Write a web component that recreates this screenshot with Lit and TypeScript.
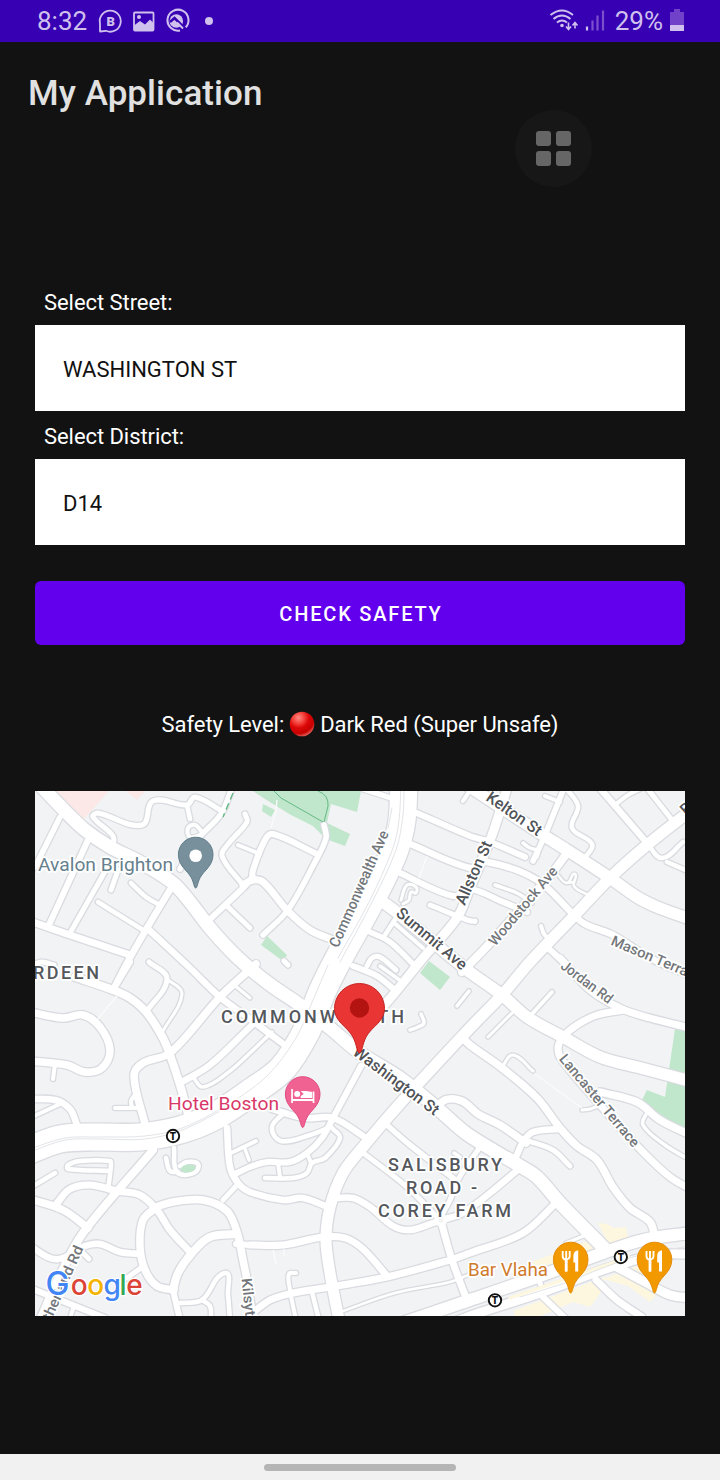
import { LitElement, html, svg, css } from "lit";
import { customElement } from "lit/decorators.js";

type Road = [number, string];

/* Roads: fill width, then the points along the centre line. */
const ROADS: Road[] = [
  // Allston, Woodstock and the northern grid
  [9, "508,785 492,835 470,888 457,918 423,958 387,1002 372,1016"],
  [8, "567,853 552,873 490,943 462,972"],
  [6, "417,813 470,836 490,842 525,857"],
  [6.5, "408,843 470,868 487,862 537,880 573,914 585,924 613,935 650,958 690,976"],
  [6, "398,872 453,896 470,889 503,902 527,912"],
  [3.5, "495,885 517,893 532,903"],
  [5, "430,905 470,921 475,921"],
  [5.5, "370,932 390,942 415,966"],
  [4, "393,922 423,948"],
  [4.5, "385,935 396,918"],
  [3, "401,900 407,885 416,887 416,893 411,892 409,900 403,904"],
  [5, "367,966 372,958 380,957 396,970"],
  [6, "353,966 377,976 397,992"],
  [3.5, "380,966 405,984"],
  [5, "363,789 391,798"],
  [4, "463,801 471,789"],
  [4, "545,796 560,802"],
  [5.5, "564,788 545,835 533,861"],
  [4.5, "566,788 578,806 572,828 592,844 585,858"],
  [3.5, "523,843 530,848 538,851 537,857"],
  [2.5, "557,874 567,883 575,874 574,886 588,895"],
  [2.5, "567,883 574,882"],
  [6.5, "598,786 647,843"],
  [4.5, "647,843 662,858 683,842"],
  [4, "615,805 628,795 640,789"],
  [5, "647,788 672,820"],
  [4.5, "667,862 690,872"],
  [4, "541,926 544,934 550,940"],
  [6, "548,948 572,970"],
  [4, "470,920 475,922"],
  // north-west
  [5.5, "60,817 35,867"],
  [6, "88,840 48,927"],
  [7, "30,921 70,935 130,955"],
  [5, "107,868 70,933"],
  [5, "118,870 111,890"],
  [6.5, "173,885 147,928 127,963 113,990"],
  [4.5, "98,902 143,930"],
  [4.5, "131,883 146,897 160,905"],
  [6.5, "147,928 190,968 220,997 250,1019 282,1043"],
  [5, "113,848 113,836 93,817 98,813 142,825 153,801 187,805 195,797 222,811"],
  [5.5, "232,788 221,814 197,840 180,869"],
  [4.5, "187,805 190,819"],
  [4, "201,835 190,837 188,828 195,825 202,832"],
  [5, "243,885 222,856 229,843 247,822 245,814"],
  [4, "238,845 260,854"],
  [6, "207,922 243,888 253,877"],
  [5, "227,906 250,928"],
  [6, "317,854 273,834 265,840 253,870 252,881"],
  [7, "243,885 252,880 263,882 287,910 310,930 333,940"],
  [5.5, "324,825 326,838 315,862 288,910 263,935"],
  [5, "284,961 288,965"],
  // west
  [5, "30,966 42,962 54,965"],
  [8, "75,977 113,990 130,998 147,1013 163,1038 170,1055 180,1085 189,1118"],
  [7.5, "30,1012 63,1018 83,1015 100,1027 110,1050 102,1068 85,1072 67,1065 30,1061"],
  [4, "55,1064 53,1079"],
  [7.5, "256,964 220,997 170,1053 143,1063 134,1076 145,1124"],
  [6.5, "180,1083 210,1065 250,1027 262,1016"],
  [3.5, "193,1077 203,1087 230,1071 250,1053 272,1032"],
  [5, "149,962 167,979 147,1011"],
  [3, "167,979 182,994 163,1031"],
  [6, "130,962 113,990"],
  [3, "233,984 250,998"],
  [6.5, "30,1099 55,1100 70,1109 77,1125"],
  [4, "30,1118 60,1104"],
  [4, "115,1108 138,1108"],
  [4, "132,1107 131,1101 134,1096"],
  [8, "153,1150 83,1233 60,1275 40,1320"],
  [7.5, "30,1199 63,1210 88,1228"],
  [7, "57,1203 70,1189 90,1185 117,1191 140,1195 157,1210 170,1230 191,1253"],
  [7.5, "157,1207 143,1220 140,1247 145,1270 157,1286 174,1290"],
  [7.5, "153,1208 173,1202 203,1200 227,1211 237,1232 243,1260 247,1280 253,1320"],
  [8, "173,1290 178,1273 192,1253 210,1237 236,1234"],
  [6, "173,1290 180,1320"],
  [4.5, "180,1303 202,1300 225,1273 228,1295 230,1320"],
  [4.5, "202,1300 210,1306 211,1320"],
  [6.5, "30,1246 50,1258 63,1258 85,1246 100,1244 120,1252 140,1254"],
  [5, "80,1250 89,1259"],
  [5, "142,1267 127,1278"],
  [6, "30,1288 105,1318"],
  [4, "73,1309 70,1318"],
  [4.5, "110,1171 68,1169 68,1165 80,1161 110,1161 111,1165 108,1190"],
  [4.5, "30,1188 55,1173"],
  [4.5, "174,1148 177,1172 194,1173 198,1164 187,1162 180,1166"],
  [4.5, "166,1158 170,1171 178,1172"],
  [6.5, "227,1128 230,1167 238,1183 250,1192 283,1200 303,1198 328,1207"],
  [5, "238,1184 223,1200"],
  [6, "233,1175 250,1167 267,1162 290,1162 307,1153 322,1138 333,1118 361,1066"],
  [4, "231,1153 256,1141"],
  [3.5, "245,1149 249,1160"],
  // around the hotel
  [6.5, "272,1109 303,1118 333,1118 363,1136"],
  [4.5, "285,1112 272,1127 281,1141 310,1135 331,1127"],
  [4.5, "333,1129 340,1138 325,1158 312,1163 307,1173 293,1178 265,1178"],
  [4, "278,1163 280,1177"],
  [4, "307,1153 311,1163"],
  // south
  [7, "250,1245 283,1245 323,1237 345,1238 363,1249 387,1276"],
  [6, "236,1244 250,1245"],
  [6.5, "335,1198 353,1198 370,1207 393,1226 410,1230 433,1223 442,1220 463,1213 490,1193 520,1168"],
  [5, "362,1152 407,1187 437,1217"],
  [5.5, "387,1125 410,1145 457,1181"],
  [5, "440,1218 450,1200 459,1178 480,1147"],
  [3.5, "454,1153 460,1157"],
  [7, "442,1225 452,1260 468,1303"],
  [7, "250,1315 270,1300 293,1293 330,1287 387,1277 450,1260 470,1253 523,1233 557,1202"],
  [2.5, "340,1312 395,1293 450,1282 475,1272"],
  [4, "296,1273 289,1274 290,1290 296,1320"],
  [4.5, "312,1292 319,1320"],
  [3, "566,1243 586,1235"],
  // east
  [7.5, "462,1037 470,1045 502,1068 537,1098 560,1128 577,1146 597,1160 613,1187 630,1208 650,1222 655,1238"],
  [6.5, "560,1129 533,1132 523,1142 516,1157"],
  [5, "525,1140 553,1150 570,1166"],
  [7.5, "434,1112 445,1100 462,1101 478,1114 500,1125 526,1143"],
  [7, "560,958 590,990 622,1009 650,1018 690,1028"],
  [7, "623,1010 597,1015 577,1025 563,1037 558,1048 562,1060 600,1105 643,1152 670,1177 690,1189"],
  [7.5, "600,1092 637,1102 660,1120 690,1135"],
  [3.5, "647,1112 643,1125 665,1145 690,1160"],
  [4, "532,1014 552,992"],
  [3, "512,1013 488,1037"],
  [3, "502,1067 513,1055 533,1071"],
  [3.5, "421,1014 424,1023 418,1027 410,1030"],
  [3.5, "469,991 457,1006"],
  [3, "582,1110 590,1109 598,1106"],
  [7, "596,1280 617,1300 642,1317"],
  [6, "543,1297 565,1318"],
  [9, "615,1266 647,1283 670,1295 690,1298"],
  [5, "539,1280 543,1292"],
  // arterials
  [13, "40,785 67,813 85,830 110,847 140,862 173,883 190,902 210,928 237,957 268,983 300,1005 330,1028 360,1053 400,1078 437,1108 467,1134 520,1166 537,1177 560,1203 605,1249"],
  [11.5, "383,902 400,915 467,970 502,995 527,1017 563,1037 600,1057 637,1067 690,1081"],
  [11.5, "467,785 543,835 567,850 610,878 637,897 657,907 690,919"],
  [11, "690,811 647,845 610,878 573,917 530,962 502,995 470,1028 397,1107 363,1147 343,1173 330,1207 326,1240 330,1273 339,1320"],
  [12, "405,1322 470,1300 537,1277 603,1253 643,1240 690,1233"],
  [9, "450,1324 470,1316 543,1292 603,1270 655,1255 690,1254"],
  [27, "404,780 402,820 394,852 370,902 339,958 322,992 306,1032 282,1069 250,1093 215,1116 180,1130 140,1137 97,1137 60,1139 25,1152"],
];

/* Passes a smooth curve through every listed point. */
function curve(src: string): string {
  const p = src.split(" ").map((s) => s.split(",").map(Number));
  let d = `M${p[0]}`;
  for (let i = 0; i < p.length - 1; i++) {
    const a = p[i - 1] ?? p[i], b = p[i], c = p[i + 1], e = p[i + 2] ?? c;
    const len = Math.hypot(c[0] - b[0], c[1] - b[1]);
    const t1 = len / (Math.hypot(c[0] - a[0], c[1] - a[1]) || 1) / 3;
    const t2 = len / (Math.hypot(e[0] - b[0], e[1] - b[1]) || 1) / 3;
    d += `C${(b[0] + (c[0] - a[0]) * t1).toFixed(1)} ${(b[1] + (c[1] - a[1]) * t1).toFixed(1)} ${(c[0] - (e[0] - b[0]) * t2).toFixed(1)} ${(c[1] - (e[1] - b[1]) * t2).toFixed(1)} ${c[0]} ${c[1]}`;
  }
  return d;
}

/* Street names: text, centre x, centre y, angle, length, size, class. */
const STREETS: [string, number, number, number, number, number, string][] = [
  ["Commonwealth Ave", 359, 889, -66, 126, 15, "st light"],
  ["Allston St", 474, 873, -66, 68, 16, "st"],
  ["Kelton St", 514, 814, 35, 64, 16, "st"],
  ["Summit Ave", 431.5, 939, 40, 87, 16, "st"],
  ["Woodstock Ave", 523, 906, -50, 98, 14.5, "st light"],
  ["Washington St", 396, 1081, 37, 103, 16, "st"],
  ["Jordan Rd", 587, 982, 37, 61, 14.5, "st light"],
  ["Lancaster Terrace", 599.5, 1100.5, 50, 116, 14.5, "st light"],
  ["Mason Terrace", 657, 959, 23, 98, 14.5, "st light"],
  ["Sutherland Rd", 59, 1291, -66, 98, 14.5, "st light"],
  ["Kilsyth Rd", 250, 1312, 84, 68, 14.5, "st light"],
];

const AREAS: [string, number, number, number][] = [
  ["ABERDEEN", -8, 979, 107],
  ["COMMONWEALTH", 221, 1023, 183],
  ["SALISBURY", 388, 1171, 114],
  ["ROAD -", 406, 1194, 71],
  ["COREY FARM", 378, 1217, 133],
];

const LOGO: [string, number, number, string][] = [
  ["G", 45.5, 32, "#4285f4"],
  ["o", 70.8, 28, "#db4437"],
  ["o", 87.3, 28, "#f4b400"],
  ["g", 103.6, 28, "#4285f4"],
  ["l", 119.5, 28, "#34a853"],
  ["e", 126.3, 28, "#db4437"],
];

@customElement("city-map")
export class CityMap extends LitElement {
  static styles = css`
    :host { display: block; width: 650px; height: 525px; }
    svg { display: block; width: 100%; height: 100%; }
    .land { fill: #f1f3f4; }
    .park { fill: #c0e6cc; }
    .health { fill: #fce8e6; }
    .shop { fill: #fef7e0; }
    .case, .road, .rail { fill: none; stroke-linecap: round; stroke-linejoin: round; }
    .case { stroke: #d9dbe0; }
    .road { stroke: #fff; }
    .rail { stroke: #e2e4e7; stroke-width: 1; }
    .trail { fill: none; stroke: #65b984; stroke-width: 1; }
    .dash { stroke-width: 1.4; stroke-dasharray: 7 4; }
    .path { fill: none; stroke: #fafbfb; stroke-width: 1.4; }
    text { font-family: Roboto, "Liberation Sans", sans-serif; }
    .st, .area, .poi {
      paint-order: stroke; stroke: #fff; stroke-width: 3.5px; stroke-linejoin: round;
    }
    .st { fill: #4f5357; font-weight: 500; text-anchor: middle; }
    .edge { text-anchor: start; }
    .light { fill: #73777b; }
    .area { fill: #54585c; font-size: 18px; font-weight: 500; }
    .poi { font-size: 18.5px; }
    .logo {
      font-family: Inter, sans-serif; font-weight: 500;
      paint-order: stroke; stroke: #fff; stroke-width: 2.5px; stroke-linejoin: round;
    }
    .tee { font-size: 10px; font-weight: 900; text-anchor: middle; fill: #111; }
  `;

  private station(x: number, y: number) {
    return svg`<g>
      <circle cx=${x} cy=${y} r="6.200" fill="#fff" stroke="#111" stroke-width="1.900"/>
      <text class="tee" x=${x} y=${y + 3.7}>T</text>
    </g>`;
  }

  private pin(x: number, y: number, fill: string, edge: string, glyph: unknown) {
    return svg`<g transform="translate(${x} ${y})">
      <path d="M0 33.5C-1.6 33.5-1.8 28-4.5 23C-8.2 16-17.3 11.5-17.3 0A17.3 17.3 0 0 1 17.3 0C17.3 11.5 8.2 16 4.5 23C1.8 28 1.6 33.5 0 33.5Z" fill=${fill} stroke=${edge}/>
      ${glyph}
    </g>`;
  }

  render() {
    const fork = svg`<g fill="none" stroke="#fff" stroke-width="2">
      <path d="M-8-8.500V-3.500Q-8 0-5 0Q-1 0-1-3.500V-8.500M-4.500-8.500V-1M-4.500 0V12" stroke-width="1.9"/>
      <path d="M-4.500-1V12" stroke-width="2.8"/>
      <path d="M2.700-3C2.700-7 4.500-9 7.500-9V12H4.500V3H2.700Z" fill="#fff" stroke="none"/>
    </g>`;
    return html`<svg viewBox="35 791 650 525">
      <rect class="land" x="35" y="791" width="650" height="525"/>
      <path class="health" d="M54 791H109L82 821ZM126 791H145L137 800Z"/>
      <path class="park" d="M253 791H361L357 812L331 804L327 823L350 834L345 846L326 839L313 826L291 815L265 799ZM263 804L275 810L271 817L262 811ZM267 936L287 955L283 961L261 945ZM429 961L450 977L440 990L420 973ZM675 1029H685V1130L641 1102L647 1090L665 1097Z"/>
      <path class="shop" d="M598 1223L608 1224L613 1228L626 1227L629 1243L610 1247ZM532 1262L595 1238L602 1246L538 1276ZM513 1311L605 1277L602 1291L590 1307L573 1302L540 1316H515ZM603 1279L637 1266L662 1288L650 1302L628 1286Z"/>
      ${ROADS.map(([w, p]) => svg`<path class="case" d=${curve(p)} stroke-width=${w + 2.6}/>`)}
      ${ROADS.map(([w, p]) => svg`<path class="road" d=${curve(p)} stroke-width=${w}/>`)}
      <circle cx="441" cy="1220" r="4.500" fill="#f1f3f4" stroke="#fff" stroke-width="4"/>
      <ellipse class="park" cx="188" cy="1168.500" rx="7.500" ry="4" transform="rotate(-8 188 1168)"/>
      <path class="shop" d="M508 1297L610 1262L630 1254L629 1258L610 1266L509 1300Z"/>
      <path class="rail" d=${curve("520,1297 565,1283 605,1267 640,1255 690,1246")}/>
      <path class="rail" d=${curve("404,785 403,815 396,850 371,904 340,962")}/>
      <path class="rail" d=${curve("401,785 399,820 393,848 369,902 338,958")}/>
      <path class="rail" d=${curve("328,965 313,1000 296,1038 268,1075 235,1100 185,1127 145,1136 100,1137 65,1138 30,1149")}/>
      <path class="rail" d=${curve("240,1100 185,1129 145,1139 100,1139 65,1140 30,1152")}/>
      <path class="rail" d="M392 808L388 828" />
      <path class="trail" d="M274 791L281 798L295 806L323 822M318 791Q329 795 328 806L324 822"/>
      <path class="trail dash" d="M233 793L223 817"/>
      <path class="path" d="M277 800L276 810L271 828M427 856L419 878M117 996L97 1020M535 1074L582 1108M273 1250L276 1264M284 1249V1256"/>

      ${STREETS.map(([t, x, y, a, len, size, cls]) => svg`<text class=${cls} transform="translate(${x} ${y}) rotate(${a})" y="5" font-size=${size} textLength=${len} lengthAdjust="spacingAndGlyphs">${t}</text>`)}
      <text class="st edge" transform="translate(686 816) rotate(-42)" font-size="16">Beacon St</text>
      ${AREAS.map(([t, x, y, len]) => svg`<text class="area" x=${x} y=${y} textLength=${len}>${t}</text>`)}

      <text class="poi" x="38" y="870.500" textLength="135" lengthAdjust="spacingAndGlyphs" fill="#66808d">Avalon Brighton</text>
      <text class="poi" x="168" y="1110" textLength="111" lengthAdjust="spacingAndGlyphs" fill="#d83868">Hotel Boston</text>
      <text class="poi" x="468" y="1275.500" textLength="80" lengthAdjust="spacingAndGlyphs" fill="#d07a2c">Bar Vlaha</text>

      ${this.station(173, 1136)}${this.station(620.8, 1257)}${this.station(495, 1300.3)}
      ${this.pin(195.7, 854.5, "#78909c", "#607d8b", svg`<circle cy="1.200" r="6.300" fill="#fff"/>`)}
      ${this.pin(302.7, 1094, "#f06292", "#e04a80", svg`<g fill="#fff">
        <path d="M-11.500-5H-9.800V5H10V-2.500H11.700V9H10V7H-9.800V9H-11.500Z"/>
        <circle cx="-5.500" cy="0" r="3"/><path d="M-2-3C2-3 3-3.500 9.500-2V4H-2V2L1 0Z"/>
      </g>`)}
      ${this.pin(570.7, 1259.5, "#f29900", "#e38b08", fork)}
      ${this.pin(654.5, 1259.5, "#f29900", "#e38b08", fork)}

      <path d="M359.500 1053C357 1053 357 1045 353 1037C347 1026 334.500 1022 334.500 1008.500A25 25 0 0 1 384.500 1008.500C384.500 1022 372 1026 366 1037C362 1045 362 1053 359.500 1053Z" fill="#ea3535" stroke="#c5221f"/>
      <circle cx="359.500" cy="1008" r="9.700" fill="#b31412"/>

      ${LOGO.map(([c, x, size, fill]) => svg`<text class="logo" x=${x} y="1294.500" font-size=${size} fill=${fill}>${c}</text>`)}
    </svg>`;
  }
}

@customElement("app-root")
export class AppRoot extends LitElement {
  static styles = css`
    :host {
      display: flex; flex-direction: column; position: relative; overflow: hidden;
      width: 720px; height: 1480px; background: #121212; color: #fff;
      font-family: Roboto, "Liberation Sans", sans-serif;
    }
    svg { display: block; }
    .status {
      display: flex; align-items: center; height: 42px; flex: none; box-sizing: border-box;
      padding: 0 36px 0 37px; background: #3700b3; color: #cfc0ee; font-size: 26px;
    }
    .notes { margin-left: 10px; }
    .right { margin-left: auto; }
    .pct { margin: 0 7px 0 10px; }
    .title { margin: 0; padding: 1px 28px 0; height: 99px; line-height: 101px; font-size: 35px; letter-spacing: .07px; font-weight: 500; color: #e1e1e1; }
    .form { display: flex; flex-direction: column; padding: 141px 35px 0; }
    .label { height: 42px; line-height: 39px; padding-left: 9px; font-size: 22px; letter-spacing: -.06px; }
    .field {
      height: 86px; line-height: 89px; padding-left: 28px; margin-bottom: 6px;
      background: #fff; color: #111; font-size: 22px;
    }
    .btn {
      margin: 30px 0 0; height: 64px; border: 0; border-radius: 6px; padding: 2px 0 0 2px;
      background: #6200ee; color: #fff; font: 500 20px Roboto, sans-serif; letter-spacing: 1.8px;
    }
    .result { display: flex; justify-content: center; align-items: center; height: 30px; margin: 64px 0 52px; font-size: 22px; letter-spacing: -.06px; white-space: pre; }
    .ball { margin: 0 5px 0 5px; }
    .nav { margin-top: auto; height: 26px; background: #f1f1f1; display: grid; place-items: center; }
    .pill { width: 192px; height: 7px; border-radius: 4px; background: #b5b5b5; }
    .float {
      position: absolute; left: 515px; top: 110px; width: 77px; height: 77px; border-radius: 50%;
      background: #171717; display: grid; grid-template-columns: 15px 15px; grid-auto-rows: 15px;
      gap: 5px; place-content: center;
    }
    .float i { background: #666; border-radius: 3px; }
    .b { font: 900 13px Roboto, sans-serif; text-anchor: middle; }
  `;

  render() {
    return html`
      <div class="status">
        <span class="clock">8:32</span>
        <svg class="notes" width="120" height="26" viewBox="97 7.5 120 26" fill="none" stroke="#cfc0ee" stroke-width="1.8">
          <path d="M100 31V23A10.500 10.500 0 1 1 106 30.300Z" stroke-linejoin="round"/>
          <text class="b" x="110.700" y="25" fill="#cfc0ee" stroke="none">B</text>
          <rect x="134" y="12" width="19.500" height="18" rx="1"/>
          <path d="M134 30V25L140 20.500L145 24L150 19L154 23V30Z" fill="#cfc0ee" stroke="none"/>
          <circle cx="139" cy="16.500" r="2" fill="#cfc0ee" stroke="none"/>
          <path d="M180 30A10.500 10.500 0 1 1 185 27.500" stroke-width="2"/>
          <circle cx="176.300" cy="20.500" r="6.800" fill="#cfc0ee" stroke="none"/>
          <path d="M170 21.500L174.500 17.500L187 30" stroke="#3700b3" stroke-width="2.500"/>
          <path d="M177 22L183 28" stroke-width="2"/>
          <circle cx="209" cy="20.500" r="4" fill="#cfc0ee" stroke="none"/>
        </svg>
        <svg class="right" width="56" height="26" viewBox="548 7.5 56 26" fill="none" stroke="#cfc0ee" stroke-width="2">
          <path d="M549.500 14.500Q561 5.500 572 14.500M552.500 18.500Q561 11.500 569.500 18.500M556 22Q561 18 566 22"/>
          <circle cx="561" cy="25" r="1.800" fill="#cfc0ee" stroke="none"/>
          <path d="M567.500 22V29M565 26L567.500 29L570 26M574 28V22M571.500 25L574 22L576.500 25" stroke-width="1.600"/>
          <path d="M586 26V30" stroke-width="2.200"/>
          <path d="M591.500 20V30M596.500 15V30M602 10V30" stroke="#7a50cd" stroke-width="2.200"/>
        </svg>
        <span class="pct">29%</span>
        <svg width="14" height="26" viewBox="0 0 14 26">
          <path d="M4 1H10V4H14V22.500H0V4H4Z" fill="#6f42c9"/><rect y="17" width="14" height="6" rx=".5" fill="#cfc0ee"/>
        </svg>
      </div>
      <h1 class="title">My Application</h1>
      <div class="form">
        <div class="label">Select Street:</div>
        <div class="field">WASHINGTON ST</div>
        <div class="label">Select District:</div>
        <div class="field">D14</div>
        <button class="btn">CHECK SAFETY</button>
        <div class="result"><span>Safety Level:</span><svg class="ball" width="26" height="26" viewBox="0 0 26 26">
            <defs><radialGradient id="g" cx=".36" cy=".25" r=".75">
              <stop offset="0" stop-color="#ff8b84"/><stop offset=".3" stop-color="#f5453f"/>
              <stop offset=".55" stop-color="#dc0808"/><stop offset=".85" stop-color="#c50000"/><stop offset="1" stop-color="#e0504a"/>
            </radialGradient></defs>
            <circle cx="13" cy="13" r="12.300" fill="url(#g)"/>
          </svg><span>Dark Red (Super Unsafe)</span></div>
        <city-map></city-map>
      </div>
      <div class="nav"><div class="pill"></div></div>
      <div class="float"><i></i><i></i><i></i><i></i></div>
    `;
  }
}
